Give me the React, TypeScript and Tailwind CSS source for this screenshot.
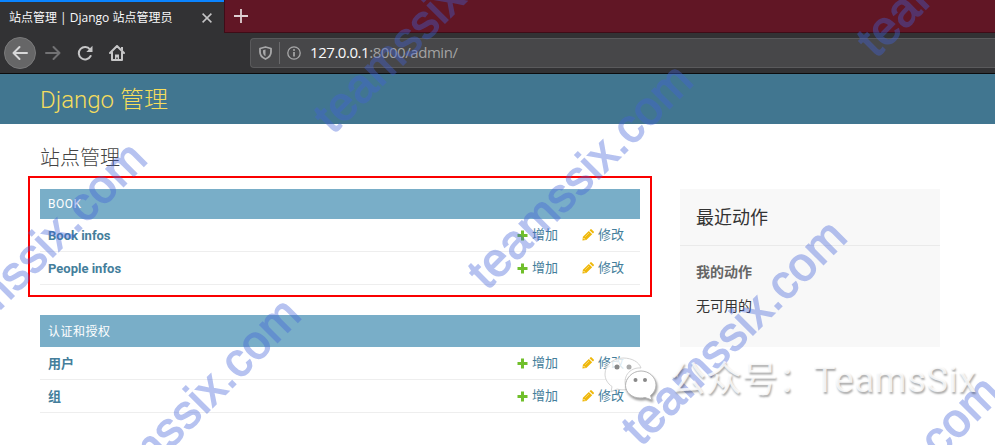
import React from "react";

const WATERMARKS: [number, number][] = [
  [-59, 369], [95, 525], [333, 135], [487, 291], [641, 447], [795, 603], [876, 59],
];

function Plus() {
  return (
    <svg className="h-[11px] w-[11px] shrink-0" viewBox="0 0 11 11">
      <path d="M4 .5h3V4h3.500v3H7v3.500H4V7H.5V4H4z" fill="#70bf2b" />
    </svg>
  );
}

function Pencil() {
  return (
    <svg className="h-[12px] w-[12px] shrink-0" viewBox="0 0 12 12">
      <path d="M.4 11.600 .9 7.700 6.800 1.900l3.400 3.400L4.300 11.100zM7.500 1.200l.8-.8q.7-.6 1.400 0l2 2q.6.7 0 1.400l-.8.8z" fill="#efb80b" />
      <path d="M1.500 9l1.500 1.500" stroke="#fff" strokeWidth=".8" />
      <path d="M3.200 7.800l3.800-3.800" stroke="#fbe7a8" strokeWidth=".6" />
    </svg>
  );
}

function Row({ name }: { name: string }) {
  return (
    <div className="flex h-[33px] items-center border-b border-[#eee] px-2 text-[13px] text-[#447e9b]">
      <span className="w-[469px] pt-[2px] font-bold">{name}</span>
      <span className="flex w-[65px] items-center gap-1"><Plus />增加</span>
      <span className="flex items-center gap-1"><Pencil />修改</span>
    </div>
  );
}

function Module({ title, rows, headClass }: { title: string; rows: string[]; headClass: string }) {
  return (
    <section className="w-[600px]">
      <h2 className={`flex items-center bg-[#79aec8] px-2 text-white ${headClass}`}>{title}</h2>
      {rows.map((r) => <Row key={r} name={r} />)}
    </section>
  );
}

function Browser() {
  return (
    <div className="font-['Open_Sans','Noto_Sans_CJK_SC',sans-serif]">
      <div className="flex h-[33px] bg-[#611625]">
        <div className="flex w-[224px] items-center border-t-2 border-[#0a84ff] bg-[#323234] pl-[9px] text-[12px] text-[#f9f9fa]">
          <span className="w-[193px] whitespace-nowrap">站点管理 | Django 站点管理员</span>
          <svg className="h-[10px] w-[10px]" viewBox="0 0 10 10"><path d="M.6.6l8.800 8.800M9.400.6.6 9.400" stroke="#c4c4c5" strokeWidth="1.500" /></svg>
        </div>
        <div className="flex flex-1 items-center border-b border-l border-[#3f0c17] pl-[9px]">
          <svg className="h-[14px] w-[14px]" viewBox="0 0 14 14"><path d="M7 0v14M0 7h14" stroke="#dfd0d3" strokeWidth="1.800" /></svg>
        </div>
      </div>
      <div className="flex h-[41px] items-center border-b border-[#0c0c0d] bg-[#323234] pl-1">
        <div className="flex h-8 w-8 items-center justify-center rounded-full border border-[#7a7a7b] bg-[#666667]">
          <svg className="h-4 w-4" viewBox="0 0 16 16" fill="none" stroke="#d8d8d9" strokeWidth="2" strokeLinecap="round" strokeLinejoin="round"><path d="M15 8H1.500M7.500 2l-6 6 6 6" /></svg>
        </div>
        <svg className="ml-[9px] h-4 w-4" viewBox="0 0 16 16" fill="none" stroke="#727274" strokeWidth="2" strokeLinecap="round" strokeLinejoin="round"><path d="M1 8h13.500M8.500 2l6 6-6 6" /></svg>
        <svg className="ml-4 h-4 w-4" viewBox="0 0 16 16"><path d="M13 4.500A6.200 6.200 0 1 0 13.600 11" fill="none" stroke="#c6c6c7" strokeWidth="2" strokeLinecap="round" /><path d="M15.500.8v6.200H9.300z" fill="#c6c6c7" /></svg>
        <svg className="ml-4 h-4 w-4" viewBox="0 0 16 16"><path d="M1 8l7-7 7 7M3 7.500V15h10V7.500" fill="none" stroke="#c6c6c7" strokeWidth="2" strokeLinecap="round" strokeLinejoin="round" /><path d="M12 2h2v4l-2-2zM6 9.500h4V15H8.700v-2.500H7.300V15H6z" fill="#c6c6c7" /></svg>
        <div className="ml-[125px] flex h-[30px] flex-1 items-center rounded-l-sm border border-r-0 border-[#5a5a5c] bg-[#474749] pl-2 text-[15px]">
          <svg className="h-[14px] w-[13px]" viewBox="0 0 13 14"><path d="M6.500 1 12 2.500V6c0 3.500-2 5.500-5.500 7C3 11.500 1 9.500 1 6V2.500z" fill="none" stroke="#a8a8a9" strokeWidth="1.800" strokeLinejoin="round" /><path d="M6.500 3.500 4 4.200V6c0 2 .8 3.300 2.500 4.300z" fill="#a8a8a9" /></svg>
          <span className="ml-[7px] h-[22px] w-px bg-[#69696b]" />
          <svg className="ml-[7px] h-[14px] w-[14px]" viewBox="0 0 14 14"><circle cx="7" cy="7" r="6.200" fill="none" stroke="#a8a8a9" strokeWidth="1.300" /><path d="M7 6v4.500" stroke="#a8a8a9" strokeWidth="1.700" /><circle cx="7" cy="4" r="1" fill="#a8a8a9" /></svg>
          <span className="-mt-[2px] ml-[9px] tracking-[-0.45px] text-[#a2a2a3]"><span className="text-[#f9f9fa]">127.0.0.1</span>:8000/admin/</span>
        </div>
      </div>
    </div>
  );
}

export default function App() {
  return (
    <div className="relative h-[445px] w-[995px] overflow-hidden bg-white font-['Roboto','Noto_Sans_CJK_SC',sans-serif]">
      <Browser />
      <header className="flex h-[50px] items-center bg-[#417690] pt-[2px] pl-10">
        <h1 className="text-[24px] font-light text-[#f5dd5d]">Django 管理</h1>
      </header>
      <main className="pl-10">
        <h1 className="flex h-[65px] items-center pt-[2px] text-[20px] font-light text-[#444]">站点管理</h1>
        <div className="flex items-start gap-10">
          <div className="flex flex-col gap-[30px]">
            <Module title="BOOK" rows={["Book infos", "People infos"]} headClass="h-[30px] text-[12px] tracking-[0.5px]" />
            <Module title="认证和授权" rows={["用户", "组"]} headClass="h-8 pt-px text-[12px] tracking-[0.5px]" />
          </div>
          <aside className="h-[158px] w-[260px] bg-[#f8f8f8]">
            <h2 className="flex h-[57px] items-center border-b border-[#eaeaea] px-4 text-[18px] text-[#333]">最近动作</h2>
            <h3 className="mt-[16px] px-4 text-[14px] leading-5 font-bold text-[#666]">我的动作</h3>
            <p className="mt-[14px] px-4 text-[14px] leading-5 text-[#333]">无可用的</p>
          </aside>
        </div>
      </main>
      <div className="absolute top-[176px] left-[28px] h-[121px] w-[624px] border-2 border-[#fa0000]" />
      <svg className="pointer-events-none absolute inset-0 h-full w-full" viewBox="0 0 995 445">
        {WATERMARKS.map(([x, y]) => (
          <text key={`${x},${y}`} transform={`translate(${x} ${y}) rotate(-45)`} fontFamily="'Liberation Sans', sans-serif" fontSize="47" textLength="294" fill="#4262d9" stroke="#4262d9" strokeWidth="1.500" opacity=".38">teamssix.com</text>
        ))}
      </svg>
      <div className="absolute top-[352px] left-[603px] flex items-center">
        <svg className="h-[54px] w-[60px]" viewBox="0 0 60 54">
          <path d="M20 5C10 5 2 12 2 21c0 5 2.500 9.500 7 12.500L8 39l6-3c3 1 7 1 10 .5C18 24 27 14 38 15 36 9 29 5 20 5z" fill="#fff" fillOpacity=".82" stroke="#c9c9c9" strokeWidth=".8" />
          <path d="M48 44.500c-1.500.4-3 .5-5 .5-8 0-14.500-5.700-14.500-12.500S35 18 44 18c8 0 15 6.200 15 14 0 4-2 8-5.500 10.500L55 47z" transform="translate(-6 0)" fill="#fff" stroke="#b5b5b5" strokeWidth="1" className="drop-shadow-[1px_2px_1px_#0006]" />
          <g fill="#888"><circle cx="14" cy="14" r="2.500" /><circle cx="26" cy="14" r="2.500" fill="#aaa" /><circle cx="32.500" cy="27" r="2" /><circle cx="42" cy="27" r="2" /></g>
        </svg>
        <span className="ml-[7px] whitespace-nowrap pt-px font-['Roboto','Noto_Sans_CJK_SC',sans-serif] text-[36px] leading-[54px] text-white/80 [text-shadow:1px_2px_2px_#0005]">公众号：<span className="tracking-[0.8px]">TeamsSix</span></span>
      </div>
    </div>
  );
}
